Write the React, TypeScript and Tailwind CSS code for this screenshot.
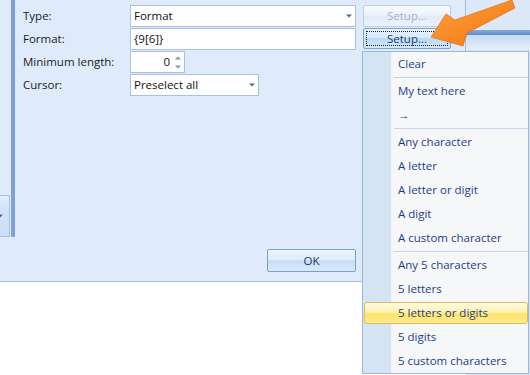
import React from "react";

function Caret({ className = "" }: { className?: string }) {
  return (
    <svg width="6" height="4" viewBox="0 0 6 4" className={className}>
      <path d="M0 0.5 H6 L3 3.5 Z" fill="#50678c" />
    </svg>
  );
}

function Row({ label, children }: { label: string; children: React.ReactNode }) {
  return (
    <div className="flex h-[22px] items-stretch">
      <div className="w-[107px] flex items-center text-[#1c1c1c]">{label}</div>
      {children}
    </div>
  );
}

const items1 = ["Any character", "A letter", "A letter or digit", "A digit", "A custom character"];
const items2 = ["Any 5 characters", "5 letters"];

function Item({ text }: { text: string }) {
  return <div className="h-[24px] flex items-center pl-[35px] text-[#1f3d8c]">{text}</div>;
}

function Sep() {
  return (
    <div className="h-[3px] pt-[1px] pl-[31px]">
      <div className="h-[1px] bg-[#c5d5e9]" />
    </div>
  );
}

export default function App() {
  return (
    <div className="relative w-[530px] h-[375px] overflow-hidden bg-white font-['Open_Sans','Noto_Sans',sans-serif] text-[11.5px] leading-none">
      <div className="flex h-full">
        {/* dialog column */}
        <div className="w-[466px] flex flex-col">
          <div className="h-[282px] flex bg-[#dfeafb] border-b border-r border-[#a3bde2]">
            {/* left strip */}
            <div className="w-[15px] h-[237px] flex">
              <div className="w-[11px] flex flex-col">
                <div className="h-[195px]" />
                <div className="h-[42px] w-[10px] border border-l-0 border-[#a9c0df] bg-[linear-gradient(#e4eefc,#d3e4f8_30%,#c9ddf5)] flex items-center">
                  <Caret className="ml-[-3px]" />
                </div>
              </div>
              <div className="w-[4px] bg-[#7ba3da] rounded-b-[1px]" />
            </div>
            {/* main */}
            <div className="flex-1 flex flex-col pl-[8px] pt-[5px] pb-[9px]">
              <div className="flex flex-col gap-[1px]">
                <Row label="Type:">
                  <div className="w-[226px] bg-white border border-[#abc1de] flex items-center justify-between pl-[3px] pr-[3px] text-[#111]">
                    <span>Format</span>
                    <Caret />
                  </div>
                  <div className="ml-[7px] w-[88px] h-[22px] border border-[#bccde6] rounded-[2px] bg-[linear-gradient(#f7fafe,#edf3fc_45%,#e1ebf8_50%,#ebf2fc)] flex items-center justify-center text-[#a2b6d3]">
                    Setup...
                  </div>
                </Row>
                <Row label="Format:">
                  <div className="w-[226px] bg-white border border-[#abc1de] flex items-center pl-[3px] text-[#111]">
                    {"{9[6]}"}
                  </div>
                  <div className="ml-[7px] w-[88px] h-[21px] border border-[#7ba2d6] rounded-[2px] bg-[linear-gradient(#e8f3fe,#d7e9fb_45%,#bcd8f6_50%,#d2e7fc)] p-[2px]">
                    <div className="h-full border border-dotted border-[#222] flex items-center justify-center text-[#1e3a6e]">
                      Setup...
                    </div>
                  </div>
                </Row>
                <Row label="Minimum length:">
                  <div className="w-[55px] bg-white border border-[#abc1de] flex items-center justify-end pr-[3px] text-[#111]">
                    <span className="mr-[5px]">0</span>
                    <div className="flex flex-col gap-[5px]">
                      <svg width="6" height="4" viewBox="0 0 6 4"><path d="M0 3.5 H6 L3 0.5 Z" fill="#7d95b8" /></svg>
                      <svg width="6" height="4" viewBox="0 0 6 4"><path d="M0 0.5 H6 L3 3.5 Z" fill="#7d95b8" /></svg>
                    </div>
                  </div>
                </Row>
                <Row label="Cursor:">
                  <div className="w-[129px] bg-white border border-[#abc1de] flex items-center justify-between pl-[3px] pr-[3px] text-[#111]">
                    <span>Preselect all</span>
                    <Caret />
                  </div>
                </Row>
              </div>
              <div className="mt-auto pl-[244px]">
                <div className="w-[89px] h-[23px] border border-[#7b9fd2] rounded-[2px] bg-[linear-gradient(#eef5fd,#e0edfb_45%,#c6ddf6_52%,#d9eafb)] flex items-center justify-center text-[#1e395b]">
                  OK
                </div>
              </div>
            </div>
          </div>
          <div className="flex-1 bg-white" />
        </div>
        {/* right panel */}
        <div className="flex-1 flex flex-col bg-[#d8e5f6]">
          <div className="h-[30px] bg-[#dde9f9]" />
          <div className="h-[5px] bg-[linear-gradient(#8aacdc,#5f8ac6)]" />
          <div className="h-[15px] bg-[linear-gradient(#c6d9f1,#e7eff9)]" />
          <div className="flex-1" />
        </div>
      </div>

      {/* popup menu */}
      <div className="absolute left-[362px] top-[51px] w-[167px] h-[323px] border border-[#9fb4d6] bg-[linear-gradient(to_right,#d5e4f3_28px,#eef4fa_28px,#eef4fa_29px,#f6f7f9_29px)] flex flex-col">
        <Item text="Clear" />
        <Sep />
        <Item text="My text here" />
        <Item text="→" />
        <Sep />
        {items1.map((t) => (
          <Item key={t} text={t} />
        ))}
        <Sep />
        {items2.map((t) => (
          <Item key={t} text={t} />
        ))}
        <div className="h-[22px] my-[1px] ml-[1px] rounded-[3px] border border-[#dfbd55] bg-[linear-gradient(#fffbe2,#fff2b0_45%,#ffe36b_55%,#fdeb8f)] flex items-center pl-[33px] text-[#1f3d8c]">
          5 letters or digits
        </div>
        <Item text="5 digits" />
        <Item text="5 custom characters" />
      </div>

      {/* callout arrow */}
      <svg className="absolute left-[425px] top-0" width="100" height="50" viewBox="0 0 100 50">
        <defs>
          <linearGradient id="og" x1="0" y1="0" x2="1" y2="1">
            <stop offset="0" stopColor="#ffa43c" />
            <stop offset="1" stopColor="#f0720f" />
          </linearGradient>
        </defs>
        <polygon points="6,37 21,14 30,20 87,0 90,8 42,33 38,46" fill="url(#og)" stroke="#e26d14" strokeWidth="0.7" strokeLinejoin="round" />
      </svg>
    </div>
  );
}
